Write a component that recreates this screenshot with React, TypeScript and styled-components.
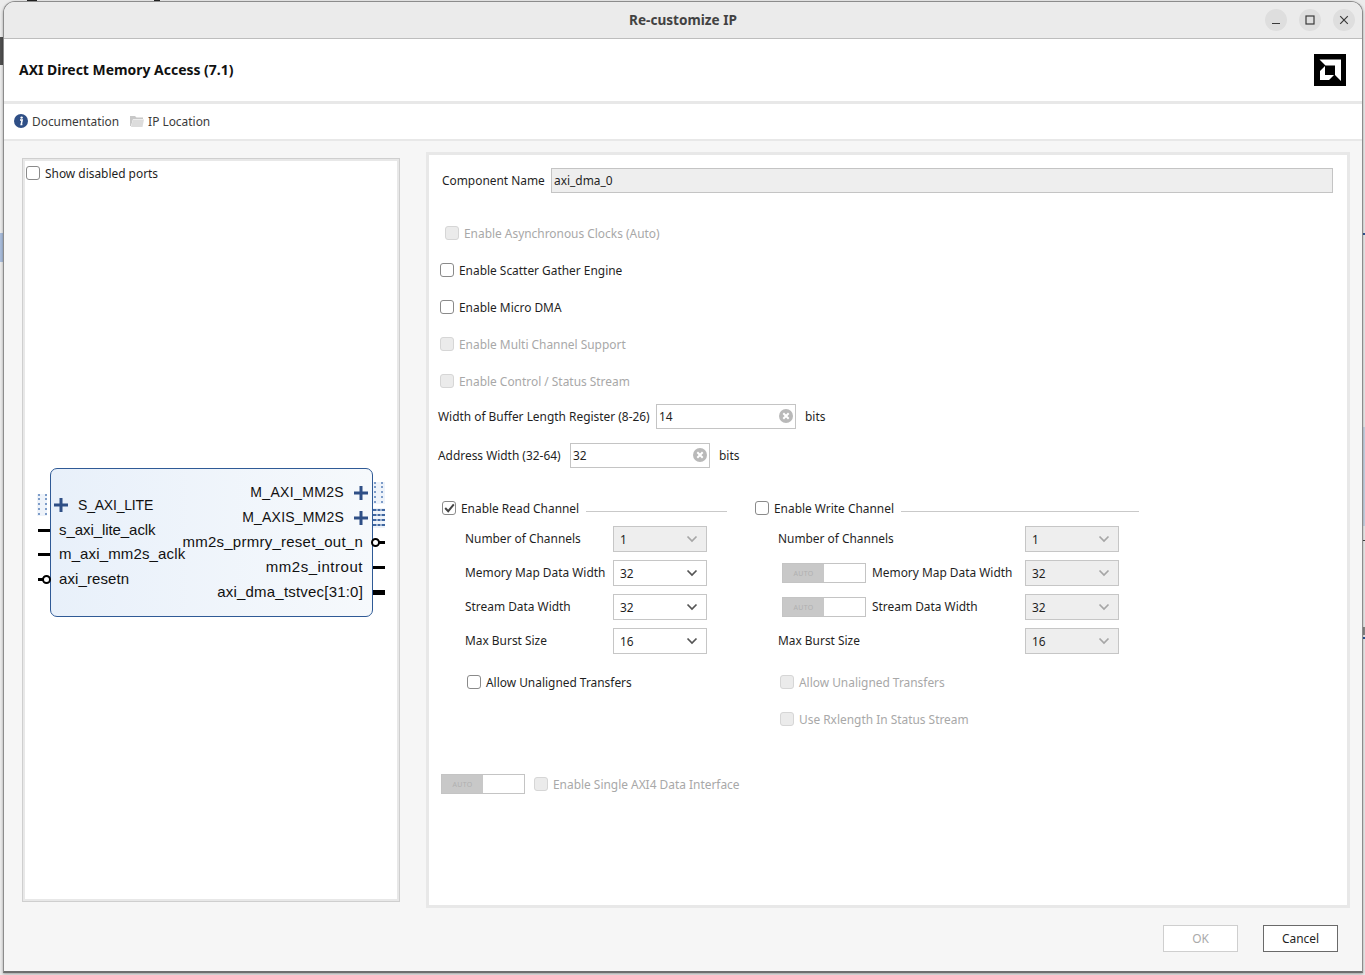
import React from "react";
import styled, { createGlobalStyle } from "styled-components";

const Global = createGlobalStyle`
  html, body { margin: 0; padding: 0; background: #e4e4e4; }
  body { font-family: "Noto Sans", "Liberation Sans", sans-serif; font-size: 11.92px; color: #1f1f1f; }
  * { box-sizing: border-box; }
`;

const Desktop = styled.div`
  width: 1365px;
  height: 975px;
  padding: 1px 2px 2px 3px;
  overflow: hidden;
  background:
    linear-gradient(#4f4f4f, #4f4f4f) 0 37px / 3px 28px no-repeat,
    linear-gradient(#a9bddc, #a9bddc) 0 233px / 3px 29px no-repeat,
    linear-gradient(#2f5597, #2f5597) 1362px 233px / 3px 2px no-repeat,
    linear-gradient(#c9d4e4, #c9d4e4) 1362px 427px / 3px 99px no-repeat,
    linear-gradient(#444, #444) 1362px 540px / 3px 1px no-repeat,
    linear-gradient(#888, #888) 1362px 627px / 3px 8px no-repeat,
    linear-gradient(#2f5597, #2f5597) 1362px 637px / 3px 2px no-repeat,
    linear-gradient(#222, #222) 27px 0 / 10px 1px no-repeat,
    linear-gradient(#222, #222) 154px 0 / 6px 1px no-repeat,
    #ececec;
`;

const Window = styled.div`
  width: 1360px;
  height: 972px;
  display: flex;
  flex-direction: column;
  background: #f6f6f6;
  border: 1px solid #8c8c8c;
  border-bottom: 2px solid #6e6e6e;
  border-radius: 12px 12px 0 0;
  overflow: hidden;
  box-shadow: 0 1px 3px rgba(0, 0, 0, 0.35);
`;

const TitleBar = styled.header`
  height: 37px;
  flex: none;
  position: relative;
  display: flex;
  align-items: center;
  justify-content: flex-end;
  gap: 12px;
  padding: 0 7px 0 0;
  background: #ebebeb;
  border-bottom: 1px solid #bdbdbd;
`;

const TitleText = styled.div`
  position: absolute;
  left: 0;
  right: 0;
  padding-bottom: 2px;
  text-align: center;
  font-size: 13.6px;
  font-weight: 700;
  color: #424242;
`;

const WinButton = styled.button`
  width: 22px;
  height: 22px;
  padding: 0;
  border: 0;
  border-radius: 50%;
  background: #dedede;
  display: flex;
  align-items: center;
  justify-content: center;
`;

const Header = styled.div`
  height: 62px;
  flex: none;
  display: flex;
  align-items: center;
  justify-content: space-between;
  padding: 0 16px 0 15px;
  background: #fff;
`;

const HeaderTitle = styled.h1`
  margin: 0 0 1px;
  font-size: 13.95px;
  font-weight: 700;
  color: #111;
`;

const Toolbar = styled.nav`
  height: 38px;
  flex: none;
  display: flex;
  align-items: center;
  gap: 11px;
  padding: 0 0 1px 10px;
  background: #fff;
  border-top: 3px solid #e8e8e8;
  color: #3a3a3a;
`;

const ToolItem = styled.span`
  display: inline-flex;
  align-items: center;
  gap: 4px;
`;

const Body = styled.main`
  flex: 1;
  display: flex;
  align-items: flex-start;
  gap: 26px;
  padding: 11px 0 0 18px;
  border-top: 2px solid #e8e8e8;
`;

const SymbolPanel = styled.section`
  width: 378px;
  height: 744px;
  margin-top: 6px;
  padding: 6px 0 0 3px;
  background: #fff;
  border: 1px solid #cfcfcf;
  box-shadow: inset 0 0 0 2px #e8e8e8;
`;

const FormPanel = styled.section`
  width: 924px;
  height: 756px;
  padding: 13px 14px 0 9px;
  background: #fff;
  border: 3px solid #e8e8e8;
`;

const Check = styled.span<{ $disabled?: boolean }>`
  width: 14px;
  height: 14px;
  flex: none;
  border-radius: 3px;
  border: 1.5px solid ${(p) => (p.$disabled ? "#d6d6d6" : "#8a8a8a")};
  background: ${(p) => (p.$disabled ? "#ebebeb" : "#fff")};
  display: inline-flex;
  align-items: center;
  justify-content: center;
`;

const CheckLabel = styled.label<{ $disabled?: boolean; $indent?: number; $h?: number }>`
  display: flex;
  align-items: center;
  gap: 5px;
  height: ${(p) => p.$h ?? 37}px;
  margin-left: ${(p) => p.$indent ?? 0}px;
  color: ${(p) => (p.$disabled ? "#a8a8a8" : "#1f1f1f")};
  white-space: nowrap;
`;

const CheckGroup = styled.div`
  margin-top: 21px;
`;

const FieldLabel = styled.span<{ $width: number }>`
  width: ${(p) => p.$width}px;
  flex: none;
  padding-bottom: 2px;
  white-space: nowrap;
`;

const Unit = styled.span`
  padding-bottom: 2px;
`;

const NameRow = styled.div`
  display: flex;
  align-items: center;
  gap: 7px;
  height: 25px;
  margin-left: 4px;
`;

const NameInput = styled.div`
  flex: 1;
  height: 25px;
  padding: 0 2px 2px;
  display: flex;
  align-items: center;
  background: #eee;
  border: 1px solid #c4c4c4;
`;

const FieldRow = styled.div<{ $gap?: number }>`
  display: flex;
  align-items: center;
  height: 25px;
  margin-top: ${(p) => p.$gap ?? 0}px;
  color: #1f1f1f;
`;

const FieldInput = styled.div`
  width: 140px;
  height: 25px;
  margin: 0 9px 0 8px;
  padding: 0 2px 1px 2px;
  display: flex;
  align-items: center;
  justify-content: space-between;
  background: #fff;
  border: 1px solid #c4c4c4;
`;

const Channels = styled.div`
  display: grid;
  grid-template-columns: 285px 384px;
  column-gap: 28px;
  margin-top: 29px;
  margin-left: 4px;
`;

const Channel = styled.div`
  display: flex;
  flex-direction: column;
`;

const ChannelHead = styled.div`
  height: 22px;
  display: flex;
  align-items: center;
  gap: 5px;
`;

const Rule = styled.span`
  flex: 1;
  height: 1px;
  margin: 6px 0 0 2px;
  background: #c9c9c9;
`;

const Rows = styled.div`
  display: flex;
  flex-direction: column;
  gap: 8px;
  margin-top: 7px;
`;

const OptionRow = styled.div<{ $width: number; $indent: number }>`
  width: ${(p) => p.$width}px;
  height: 26px;
  margin-left: ${(p) => p.$indent}px;
  display: flex;
  align-items: center;
  justify-content: space-between;
`;

const OptionName = styled.span`
  display: inline-flex;
  align-items: center;
  gap: 6px;
`;

const OptionText = styled.span`
  padding-bottom: 2px;
`;

const Select = styled.div<{ $disabled?: boolean }>`
  width: 94px;
  height: 26px;
  flex: none;
  padding: 0 8px 0 6px;
  display: flex;
  align-items: center;
  justify-content: space-between;
  background: ${(p) => (p.$disabled ? "#eee" : "#fff")};
  border: 1px solid #c6c6c6;
`;

const Toggle = styled.span`
  width: 84px;
  height: 20px;
  flex: none;
  display: inline-flex;
  background: #fff;
  border: 1px solid #c4c4c4;
`;

const ToggleAuto = styled.span`
  width: 41px;
  background: #c8c8c8;
  color: #b0b0b0;
  font-size: 7px;
  letter-spacing: 0.3px;
  display: flex;
  align-items: center;
  justify-content: center;
`;

const Options = styled.div`
  margin-top: 9px;
`;

const SingleRow = styled.div`
  display: flex;
  align-items: center;
  gap: 9px;
  height: 20px;
  margin-top: 37px;
  margin-left: 3px;
`;

const Footer = styled.footer`
  position: absolute;
  right: 27px;
  top: 925px;
  display: flex;
  gap: 25px;
`;

const DialogButton = styled.button<{ $disabled?: boolean }>`
  width: 75px;
  height: 27px;
  padding: 0 0 2px;
  font: inherit;
  background: #fff;
  color: ${(p) => (p.$disabled ? "#aaa" : "#1f1f1f")};
  border: 1px solid ${(p) => (p.$disabled ? "#cfcfcf" : "#6a6a6a")};
`;

const DiagramArea = styled.div`
  margin: 287px 0 0 24px;
`;

const Block = styled.div`
  width: 323px;
  height: 149px;
  display: flex;
  justify-content: space-between;
  font-family: "Liberation Sans", Arial, sans-serif;
  font-size: 15px;
  color: #111;
  background: linear-gradient(to right, #e8f0fa, #f6f9fc);
  border: 1px solid #2f5a96;
  border-radius: 7px;
`;

const PortCol = styled.div<{ $top: number; $right?: boolean }>`
  width: ${(p) => (p.$right ? "190px" : "130px")};
  padding-top: ${(p) => p.$top}px;
  display: flex;
  flex-direction: column;
  align-items: ${(p) => (p.$right ? "flex-end" : "flex-start")};
`;

const Port = styled.div<{ $right?: boolean; $bus?: boolean; $spacing?: number }>`
  position: relative;
  height: ${(p) => (p.$right ? 25 : 24.7)}px;
  line-height: ${(p) => (p.$right ? (p.$bus ? 25 : 23) : 24.7)}px;
  white-space: nowrap;
  letter-spacing: ${(p) => p.$spacing ?? 0.2}px;
  margin: ${(p) => (p.$right ? `0 ${p.$bus ? 28 : 9}px 0 0` : `0 0 0 ${p.$bus ? 27 : 8}px`)};
  ${(p) => (p.$bus ? "font-size: 14px;" : "")}
`;

const Stub = styled.span<{ $right?: boolean; $thick?: number }>`
  position: absolute;
  top: 50%;
  height: ${(p) => p.$thick ?? 3}px;
  margin-top: ${(p) => -(p.$thick ?? 3) / 2}px;
  width: 12px;
  background: #000;
  ${(p) => (p.$right ? "right: -22px;" : "left: -21px;")}
`;

const Bubble = styled.span<{ $right?: boolean }>`
  position: absolute;
  top: 50%;
  width: 9px;
  height: 9px;
  margin-top: -4.5px;
  border: 2.5px solid #000;
  border-radius: 50%;
  background: #fff;
  ${(p) => (p.$right ? "right: -17px;" : "left: -17px;")}
`;

const BusIcon = styled.svg<{ $right?: boolean }>`
  position: absolute;
  top: 50%;
  margin-top: -7px;
  ${(p) => (p.$right ? "right: -24px;" : "left: -24px;")}
`;

const PortTag = styled.svg<{ $right?: boolean }>`
  position: absolute;
  top: 50%;
  margin-top: -11px;
  ${(p) => (p.$right ? "right: -41px;" : "left: -41px;")}
`;

const Chevron = ({ disabled }: { disabled?: boolean }) => (
  <svg width="12" height="8" viewBox="0 0 12 8">
    <path d="M1.5 1.5 6 6l4.5-4.5" fill="none" stroke={disabled ? "#a6a6a6" : "#555"} strokeWidth="1.7" />
  </svg>
);

const ClearIcon = () => (
  <svg width="14" height="14" viewBox="0 0 14 14">
    <circle cx="7" cy="7" r="7" fill="#b9b9b9" />
    <path d="M4.3 4.3l5.4 5.4M9.7 4.3l-5.4 5.4" stroke="#fff" strokeWidth="2" />
  </svg>
);

const Tick = () => (
  <svg width="11" height="10" viewBox="0 0 11 10">
    <path d="M1.2 5 4.2 8.2 9.8 1.4" fill="none" stroke="#444" strokeWidth="2" />
  </svg>
);

const Plus = () => (
  <path d="M7 0v14M0 7h14" stroke="#2f4f86" strokeWidth="3" />
);

const DotTag = () => (
  <>
    <rect width="12" height="22" fill="#eef3fa" />
    <path d="M1 1h3M8 1h3M1 5h3M8 5h3M1 10h3M8 10h3M1 15h3M8 15h3M1 20h3M8 20h3" stroke="#7d9cc8" strokeWidth="2" strokeDasharray="2 1" />
  </>
);

const GridTag = () => (
  <>
    <rect y="1" width="12" height="20" fill="#eef3fa" />
    <path d="M0 3h12M0 8h12M0 13h12M0 18h12" stroke="#3f66a0" strokeWidth="2" />
    <path d="M4 1v20M8 1v20" stroke="#eef3fa" strokeWidth="1" />
  </>
);

const Box = ({ checked, disabled }: { checked?: boolean; disabled?: boolean }) => (
  <Check $disabled={disabled}>{checked && <Tick />}</Check>
);

const Auto = () => (
  <Toggle><ToggleAuto>AUTO</ToggleAuto></Toggle>
);

const Option = ({ name, value, disabled, auto, width, indent }: { name: string; value: string; disabled?: boolean; auto?: boolean; width: number; indent: number }) => (
  <OptionRow $width={width} $indent={indent}>
    <OptionName>{auto && <Auto />}<OptionText>{name}</OptionText></OptionName>
    <Select $disabled={disabled}>{value}<Chevron disabled={disabled} /></Select>
  </OptionRow>
);

export default function App() {
  return (
    <Desktop>
      <Global />
      <Window>
        <TitleBar>
          <TitleText>Re-customize IP</TitleText>
          <WinButton aria-label="minimize">
            <svg width="10" height="10" viewBox="0 0 10 10"><path d="M1 8.5h8" stroke="#3a3a3a" strokeWidth="1.2" /></svg>
          </WinButton>
          <WinButton aria-label="maximize">
            <svg width="10" height="10" viewBox="0 0 10 10"><rect x="1" y="1" width="8" height="8" fill="none" stroke="#3a3a3a" strokeWidth="1.2" /></svg>
          </WinButton>
          <WinButton aria-label="close">
            <svg width="10" height="10" viewBox="0 0 10 10"><path d="M1.2 1.2l7.6 7.6M8.8 1.2l-7.6 7.6" stroke="#3a3a3a" strokeWidth="1.2" /></svg>
          </WinButton>
        </TitleBar>
        <Header>
          <HeaderTitle>AXI Direct Memory Access (7.1)</HeaderTitle>
          <svg width="32" height="32" viewBox="0 0 32 32">
            <rect width="32" height="32" fill="#000" />
            <path d="M5.5 5.5H27V27l-6-6V11.5H11.5Z" fill="#fff" />
            <path d="M11 12 6 17v9h9l5-5H11Z" fill="#fff" />
          </svg>
        </Header>
        <Toolbar>
          <ToolItem>
            <svg width="14" height="14" viewBox="0 0 14 14">
              <circle cx="7" cy="7" r="7" fill="#2f4f86" />
              <circle cx="7.6" cy="3.6" r="1.2" fill="#fff" />
              <path d="M6 6h2.2L7.2 10.6H8.4" fill="none" stroke="#fff" strokeWidth="1.5" />
            </svg>
            Documentation
          </ToolItem>
          <ToolItem>
            <svg width="14" height="12" viewBox="0 0 14 12">
              <path d="M0 1h5l1.5 1.5H13V4H3L1 11H0Z" fill="#c8c8c8" />
              <path d="M3 4.5h11L12.5 12H1Z" fill="#dcdcdc" />
            </svg>
            IP Location
          </ToolItem>
        </Toolbar>
        <Body>
          <SymbolPanel>
            <CheckLabel $h={16}><Box />Show disabled ports</CheckLabel>
            <DiagramArea>
              <Block>
                <PortCol $top={24}>
                  <Port $bus $spacing={-0.2}>
                    <PortTag width="10" height="22"><DotTag /></PortTag>
                    <BusIcon width="14" height="14"><Plus /></BusIcon>
                    S_AXI_LITE
                  </Port>
                  <Port $spacing={-0.07}><Stub />s_axi_lite_aclk</Port>
                  <Port $spacing={0.14}><Stub />m_axi_mm2s_aclk</Port>
                  <Port $spacing={0.1}><Stub /><Bubble />axi_resetn</Port>
                </PortCol>
                <PortCol $top={11} $right>
                  <Port $right $bus $spacing={0.35}>
                    <PortTag $right width="12" height="22"><DotTag /></PortTag>
                    <BusIcon $right width="14" height="14"><Plus /></BusIcon>
                    M_AXI_MM2S
                  </Port>
                  <Port $right $bus $spacing={0.2}>
                    <PortTag $right width="12" height="22"><GridTag /></PortTag>
                    <BusIcon $right width="14" height="14"><Plus /></BusIcon>
                    M_AXIS_MM2S
                  </Port>
                  <Port $right $spacing={0.25}><Stub $right /><Bubble $right />mm2s_prmry_reset_out_n</Port>
                  <Port $right $spacing={0.53}><Stub $right />mm2s_introut</Port>
                  <Port $right><Stub $right $thick={5} />axi_dma_tstvec[31:0]</Port>
                </PortCol>
              </Block>
            </DiagramArea>
          </SymbolPanel>
          <FormPanel>
            <NameRow>
              <FieldLabel $width={102}>Component Name</FieldLabel>
              <NameInput>axi_dma_0</NameInput>
            </NameRow>
            <CheckGroup>
              <CheckLabel $disabled $indent={7}><Box disabled />Enable Asynchronous Clocks (Auto)</CheckLabel>
              <CheckLabel $indent={2}><Box />Enable Scatter Gather Engine</CheckLabel>
              <CheckLabel $indent={2}><Box />Enable Micro DMA</CheckLabel>
              <CheckLabel $disabled $indent={2}><Box disabled />Enable Multi Channel Support</CheckLabel>
              <CheckLabel $disabled $indent={2}><Box disabled />Enable Control / Status Stream</CheckLabel>
            </CheckGroup>
            <FieldRow $gap={5}>
              <FieldLabel $width={210}>Width of Buffer Length Register (8-26)</FieldLabel>
              <FieldInput>14<ClearIcon /></FieldInput>
              <Unit>bits</Unit>
            </FieldRow>
            <FieldRow $gap={14}>
              <FieldLabel $width={124}>Address Width (32-64)</FieldLabel>
              <FieldInput>32<ClearIcon /></FieldInput>
              <Unit>bits</Unit>
            </FieldRow>
            <Channels>
              <Channel>
                <ChannelHead><Box checked />Enable Read Channel<Rule /></ChannelHead>
                <Rows>
                  <Option indent={23} width={242} name="Number of Channels" value="1" disabled />
                  <Option indent={23} width={242} name="Memory Map Data Width" value="32" />
                  <Option indent={23} width={242} name="Stream Data Width" value="32" />
                  <Option indent={23} width={242} name="Max Burst Size" value="16" />
                </Rows>
                <Options>
                  <CheckLabel $indent={25}><Box />Allow Unaligned Transfers</CheckLabel>
                </Options>
              </Channel>
              <Channel>
                <ChannelHead><Box />Enable Write Channel<Rule /></ChannelHead>
                <Rows>
                  <Option indent={23} width={341} name="Number of Channels" value="1" disabled />
                  <Option indent={27} width={337} name="Memory Map Data Width" value="32" disabled auto />
                  <Option indent={27} width={337} name="Stream Data Width" value="32" disabled auto />
                  <Option indent={23} width={341} name="Max Burst Size" value="16" disabled />
                </Rows>
                <Options>
                  <CheckLabel $disabled $indent={25}><Box disabled />Allow Unaligned Transfers</CheckLabel>
                  <CheckLabel $disabled $indent={25}><Box disabled />Use Rxlength In Status Stream</CheckLabel>
                </Options>
              </Channel>
            </Channels>
            <SingleRow>
              <Auto />
              <CheckLabel $disabled $h={20}><Box disabled />Enable Single AXI4 Data Interface</CheckLabel>
            </SingleRow>
          </FormPanel>
        </Body>
        <Footer>
          <DialogButton $disabled>OK</DialogButton>
          <DialogButton>Cancel</DialogButton>
        </Footer>
      </Window>
    </Desktop>
  );
}
